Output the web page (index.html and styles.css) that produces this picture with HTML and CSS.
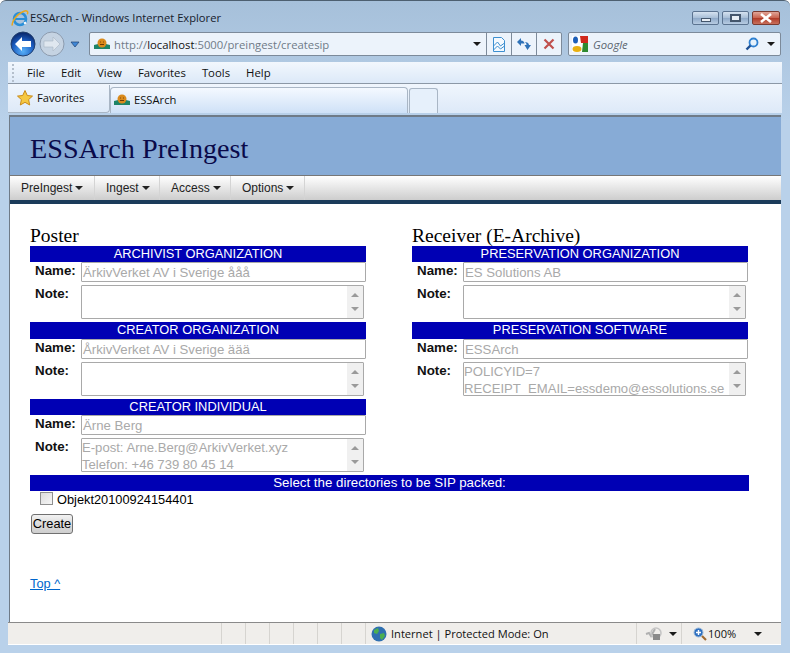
FILE: index.html
```html
<!DOCTYPE html>
<html lang="en">

<head>
  <meta charset="UTF-8">
  <title>ESSArch - Windows Internet Explorer</title>
  <link rel="stylesheet" href="styles.css">
</head>

<body>
  <div class="window">

    <div class="titlebar">
      <svg class="ie-icon" viewBox="0 0 18 18" width="18" height="18">
        <ellipse cx="9" cy="10" rx="6" ry="6" fill="none" stroke="#2b8fd8" stroke-width="2.6"/>
        <path d="M4 10h10" stroke="#2b8fd8" stroke-width="2"/>
        <path d="M13 14.5l2-1" stroke="#fff" stroke-width="2"/>
        <path d="M1.5 16.5C0 14 5 5 13 2.2c3-1 4.500 .5 3.300 3" fill="none" stroke="#e8a820" stroke-width="1.500"/>
      </svg>
      <span class="title-text">ESSArch - Windows Internet Explorer</span>
      <div class="win-buttons">
        <div class="win-btn"><span class="glyph-min"></span></div>
        <div class="win-btn"><span class="glyph-max"></span></div>
        <div class="win-btn win-close">
          <svg viewBox="0 0 14 10" width="14" height="10"><path d="M2 1l10 8M12 1L2 9" stroke="#fff" stroke-width="2.600"/></svg>
        </div>
      </div>
    </div>

    <div class="navbar">
      <svg class="nav-round" viewBox="0 0 26 26" width="26" height="26">
        <defs>
          <radialGradient id="backfill" cx="50%" cy="80%" r="75%">
            <stop offset="0" stop-color="#58b0f8"/>
            <stop offset=".6" stop-color="#1b5cc0"/>
            <stop offset="1" stop-color="#0a2a70"/>
          </radialGradient>
        </defs>
        <circle cx="13" cy="13" r="12" fill="url(#backfill)" stroke="#23406e"/>
        <path d="M5 13l7-7v4h9v6h-9v4z" fill="#fff"/>
      </svg>
      <svg class="nav-round fwd" viewBox="0 0 26 26" width="26" height="26">
        <circle cx="13" cy="13" r="12" fill="#c5d3e2" stroke="#8c9bae"/>
        <path d="M21 13l-7-7v4H5v6h9v4z" fill="#dfe7ef" stroke="#aab6c4" stroke-width=".6"/>
      </svg>
      <svg class="nav-drop" viewBox="0 0 10 7" width="10" height="7"><path d="M1 1h8L5 6z" fill="#3f87d6" stroke="#23406e" stroke-width=".7"/></svg>

      <div class="address">
        <svg class="site-icon" viewBox="0 0 16 12" width="16" height="12">
          <path d="M0 11V7l4-1h8l4 1v4z" fill="#1d8468"/>
          <circle cx="8" cy="5" r="4.500" fill="#d98a1c"/>
          <path d="M6 4h.8M9.200 4h.8M6 6.500h4" stroke="#6b3a08"/>
        </svg>
        <span class="url">http://<b>localhost</b>:5000/preingest/createsip</span>
        <span class="caret addr-caret"></span>
        <div class="addr-btn">
          <svg viewBox="0 0 14 15" width="14" height="15"><path d="M1.500 .5h8l3 3v11h-11z" fill="#f4f9fe" stroke="#3c8fd0"/><path d="M1.500 9l4-4 3 4 4-3M1.500 13l4-4 3 3 4-3" fill="none" stroke="#3c8fd0"/></svg>
        </div>
        <div class="addr-btn">
          <svg viewBox="0 0 16 14" width="16" height="14"><path d="M1 5l4-4v2.500c2 0 3 1 3.500 3H5V9z" fill="#2f72b8"/><path d="M15 8l-3.500 5-3-5h2c0-1.500-.5-2.500-2-3 2.500 0 4.500 1 4.500 3z" fill="#2f72b8"/></svg>
        </div>
        <div class="addr-btn">
          <svg viewBox="0 0 12 12" width="12" height="12"><path d="M1.500 1.500l9 9M10.500 1.500l-9 9" stroke="#c0504d" stroke-width="2.200"/></svg>
        </div>
      </div>

      <div class="search">
        <svg class="google-icon" viewBox="0 0 16 16" width="16" height="16">
          <rect width="16" height="16" fill="#fff"/>
          <path d="M8 0h8v7H9z" fill="#d0281c"/>
          <path d="M11 7h5v9H10z" fill="#2f8a30"/>
          <ellipse cx="3.500" cy="4" rx="2.500" ry="3.500" fill="#1d5fb8"/>
          <ellipse cx="5" cy="13" rx="4.500" ry="3" fill="#e8b010"/>
        </svg>
        <span class="search-text">Google</span>
        <svg class="lens" viewBox="0 0 14 14" width="14" height="14"><circle cx="8.500" cy="5.500" r="4" fill="#e6f2fc" stroke="#2f80d0" stroke-width="1.800"/><path d="M5.500 8.500L1.500 12.500" stroke="#1d4f94" stroke-width="2.400"/></svg>
        <span class="caret"></span>
      </div>
    </div>

    <div class="menubar">
      <span class="grip"></span>
      <span class="menu-item">File</span>
      <span class="menu-item">Edit</span>
      <span class="menu-item">View</span>
      <span class="menu-item">Favorites</span>
      <span class="menu-item">Tools</span>
      <span class="menu-item">Help</span>
    </div>

    <div class="favbar">
      <div class="fav-btn">
        <svg viewBox="0 0 16 16" width="16" height="16"><path d="M8 .5l2.300 5 5.200.6-3.900 3.500 1.100 5.400L8 12.300 3.300 15l1.100-5.400L.5 6.100l5.200-.6z" fill="#f5c842" stroke="#c98a18"/></svg>
        <span>Favorites</span>
      </div>
      <div class="tab">
        <svg class="site-icon" viewBox="0 0 16 12" width="16" height="12">
          <path d="M0 11V7l4-1h8l4 1v4z" fill="#1d8468"/>
          <circle cx="8" cy="5" r="4.500" fill="#d98a1c"/>
          <path d="M6 4h.8M9.200 4h.8M6 6.500h4" stroke="#6b3a08"/>
        </svg>
        <span>ESSArch</span>
      </div>
      <div class="tab-new"></div>
    </div>

    <div class="viewport">
      <div class="page-head">
        <h1>ESSArch PreIngest</h1>
      </div>
      <ul class="page-menu">
        <li>PreIngest<i></i></li>
        <li>Ingest<i></i></li>
        <li>Access<i></i></li>
        <li>Options<i></i></li>
      </ul>

      <div class="content">
        <div class="columns">
          <div class="column">
            <h2>Poster</h2>
            <div class="section-head">ARCHIVIST ORGANIZATION</div>
            <div class="field">
              <label>Name:</label>
              <div class="input">ÄrkivVerket AV i Sverige ååå</div>
            </div>
            <div class="field note">
              <label>Note:</label>
              <div class="textarea"><div class="text"></div><div class="scroll"><i class="up"></i><i class="down"></i></div></div>
            </div>
            <div class="section-head tall">CREATOR ORGANIZATION</div>
            <div class="field">
              <label>Name:</label>
              <div class="input">ÅrkivVerket AV i Sverige äää</div>
            </div>
            <div class="field note">
              <label>Note:</label>
              <div class="textarea"><div class="text"></div><div class="scroll"><i class="up"></i><i class="down"></i></div></div>
            </div>
            <div class="section-head">CREATOR INDIVIDUAL</div>
            <div class="field">
              <label>Name:</label>
              <div class="input">Ärne Berg</div>
            </div>
            <div class="field note">
              <label>Note:</label>
              <div class="textarea"><div class="text">E-post: Arne.Berg@ArkivVerket.xyz<br>Telefon: +46 739 80 45 14</div><div class="scroll"><i class="up"></i><i class="down"></i></div></div>
            </div>
          </div>

          <div class="column">
            <h2>Receiver (E-Archive)</h2>
            <div class="section-head">PRESERVATION ORGANIZATION</div>
            <div class="field">
              <label>Name:</label>
              <div class="input">ES Solutions AB</div>
            </div>
            <div class="field note">
              <label>Note:</label>
              <div class="textarea"><div class="text"></div><div class="scroll"><i class="up"></i><i class="down"></i></div></div>
            </div>
            <div class="section-head tall">PRESERVATION SOFTWARE</div>
            <div class="field">
              <label>Name:</label>
              <div class="input">ESSArch</div>
            </div>
            <div class="field note">
              <label>Note:</label>
              <div class="textarea"><div class="text">POLICYID=7<br>RECEIPT_EMAIL=essdemo@essolutions.se</div><div class="scroll"><i class="up"></i><i class="down"></i></div></div>
            </div>
          </div>
        </div>

        <div class="section-head dirs">Select the directories to be SIP packed:</div>
        <div class="dir-row"><span class="checkbox"></span>Objekt20100924154401</div>
        <div class="create">Create</div>
        <a class="top-link" href="#">Top ^</a>
      </div>
    </div>

    <div class="statusbar">
      <div class="cell first"></div>
      <div class="cell small"></div>
      <div class="cell small"></div>
      <div class="cell small"></div>
      <div class="cell small"></div>
      <div class="cell small"></div>
      <div class="cell small"></div>
      <div class="cell zone">
        <svg viewBox="0 0 16 16" width="16" height="16">
          <circle cx="8" cy="8" r="7.500" fill="#2f6fb0"/>
          <path d="M3 4l4-2 1 3-2 3-3-1zM9 8l4-1 1 3-3 4-2-2z" fill="#4caf50"/>
        </svg>
        <span>Internet | Protected Mode: On</span>
      </div>
      <div class="cell lock">
        <svg viewBox="0 0 18 14" width="18" height="14">
          <path d="M1 7l3-1 2 3 4-7" fill="none" stroke="#b0b0b0" stroke-width="2"/>
          <circle cx="11" cy="6" r="5" fill="none" stroke="#c4c4c4" stroke-width="1.500"/>
          <rect x="8" y="7" width="7" height="6" fill="#8a8a8a"/>
        </svg>
        <span class="caret"></span>
      </div>
      <div class="cell zoom">
        <svg viewBox="0 0 14 14" width="14" height="14">
          <circle cx="5.500" cy="5.500" r="4.500" fill="#2f70c0" stroke="#9ab8d8"/>
          <path d="M3 5.500h5M5.500 3v5" stroke="#fff" stroke-width="1.400"/>
          <path d="M9 9l4 4" stroke="#a06a30" stroke-width="2.200"/>
        </svg>
        <span>100%</span>
        <span class="caret"></span>
      </div>
    </div>

  </div>
</body>

</html>
```

FILE: styles.css
```css
* {
  box-sizing: border-box;
}

body {
  margin: 0;
  font-family: "Liberation Sans", Arial, sans-serif;
}

.window {
  width: 790px;
  height: 653px;
  overflow: hidden;
  display: flex;
  flex-direction: column;
  border-top: 1px solid #4d5f70;
  border-radius: 6px 6px 0 0;
  background: linear-gradient(#a6c0da, #b9d1ea 120px, #b9d1ea);
}

.titlebar {
  height: 28px;
  flex: none;
  display: flex;
  align-items: center;
  padding: 5px 10px 0 11px;
}

.ie-icon {
  margin-right: 1px;
}

.title-text {
  font-family: "Open Sans", sans-serif;
  font-size: 11.2px;
  color: #16202c;
}

.win-buttons {
  margin-left: auto;
  display: flex;
  gap: 3px;
  align-self: flex-start;
  margin-top: 5px;
}

.win-btn {
  width: 27px;
  height: 14px;
  border: 1px solid #5b7390;
  border-radius: 2px;
  background: linear-gradient(#d5e2f0, #a6bdd6 50%, #8ea9c8 52%, #b8cce2);
  display: flex;
  align-items: center;
  justify-content: center;
}

.win-close {
  width: 28px;
  border-color: #7b3a30;
  background: linear-gradient(#e0a598, #c8604c 50%, #b03a28 52%, #c8705c);
}

.glyph-min {
  width: 10px;
  height: 4px;
  margin-top: 4px;
  background: #e8eef5;
  border: 1px solid #44566c;
}

.glyph-max {
  width: 11px;
  height: 8px;
  border: 2px solid #44566c;
  background: #e8eef5;
}

.navbar {
  height: 30px;
  flex: none;
  display: flex;
  align-items: center;
  padding-left: 10px;
}

.nav-round.fwd {
  margin-left: 3px;
}

.nav-drop {
  margin-left: 5px;
}

.address {
  width: 473px;
  height: 24px;
  margin-left: 9px;
  display: flex;
  align-items: center;
  background: #ecf3fb;
  border: 1px solid #7c8a9a;
  border-radius: 2px;
  padding-left: 4px;
}

.site-icon {
  flex: none;
}

.url {
  margin-left: 4px;
  font-family: "Open Sans", sans-serif;
  font-size: 11.3px;
  color: #6f7b88;
  flex: 1;
}

.url b {
  font-weight: normal;
  color: #111;
}

.caret {
  width: 0;
  height: 0;
  border-left: 4px solid transparent;
  border-right: 4px solid transparent;
  border-top: 4px solid #1a1a1a;
  flex: none;
}

.addr-caret {
  margin-right: 5px;
}

.addr-btn {
  width: 25px;
  height: 22px;
  border-left: 1px solid #7c8a9a;
  display: flex;
  align-items: center;
  justify-content: center;
}

.search {
  width: 213px;
  height: 24px;
  margin-left: 6px;
  display: flex;
  align-items: center;
  background: #ecf3fb;
  border: 1px solid #7c8a9a;
  border-radius: 2px;
  padding: 0 5px 0 3px;
}

.search-text {
  margin-left: 5px;
  font-family: "Open Sans", sans-serif;
  font-size: 11.3px;
  font-style: italic;
  color: #5c6670;
  flex: 1;
}

.lens {
  margin-right: 8px;
}

.menubar {
  height: 22px;
  margin: 3px 8px 0;
  flex: none;
  display: flex;
  align-items: center;
  gap: 16px;
  padding-left: 4px;
  background: linear-gradient(#f2f7fd, #dce9f8);
  border-bottom: 1px solid #8c98a6;
  font-family: "Open Sans", sans-serif;
  font-size: 11.35px;
  color: #111;
}

.grip {
  width: 2px;
  height: 18px;
  margin-right: -3px;
  border-left: 2px dotted #b4bfcc;
}

.favbar {
  height: 29px;
  margin: 0 8px 2px;
  flex: none;
  display: flex;
  align-items: flex-end;
  background: linear-gradient(#f0f6fd, #dde9f8);
  font-family: "Open Sans", sans-serif;
  font-size: 11.2px;
  color: #111;
}

.fav-btn {
  width: 102px;
  height: 28px;
  display: flex;
  align-items: center;
  gap: 4px;
  padding: 0 0 2px 9px;
  border-right: 1px solid #a9b6c5;
  border-bottom: 1px solid #a9b6c5;
  border-radius: 0 0 4px 0;
}

.tab {
  width: 298px;
  height: 26px;
  display: flex;
  align-items: center;
  gap: 4px;
  padding: 0 0 2px 3px;
  background: linear-gradient(#f4f9ff, #cfe1f7);
  border: 1px solid #a9b6c5;
  border-bottom: none;
  border-radius: 4px 4px 0 0;
}

.tab-new {
  width: 29px;
  height: 25px;
  margin-left: 1px;
  background: #e6f0fb;
  border: 1px solid #a9b6c5;
  border-bottom: none;
  border-radius: 3px 3px 0 0;
}

.viewport {
  flex: 1;
  margin: 0 9px 0 9px;
  border-top: 2px solid #6f7b88;
  border-left: 1px solid #6f7b88;
  background: #fff;
  min-height: 0;
}

.page-head {
  height: 59px;
  padding: 16px 0 0 20px;
  background: #87abd6;
  border-bottom: 1px solid #777;
}

h1 {
  margin: 0;
  font-family: "Liberation Serif", "Times New Roman", serif;
  font-weight: normal;
  font-size: 28.2px;
  color: #0a0a4a;
}

.page-menu {
  margin: 0;
  padding: 0;
  list-style: none;
  height: 28px;
  display: flex;
  background: linear-gradient(#fff, #cdcdcd);
  border-bottom: 4px solid #1b3b5a;
  font-size: 12px;
  color: #222;
}

.page-menu li {
  height: 24px;
  display: flex;
  align-items: center;
  padding-left: 11px;
  border-right: 1px solid #d4d4d4;
}

.page-menu li:nth-child(1) {
  width: 85px;
}

.page-menu li:nth-child(2) {
  width: 65px;
}

.page-menu li:nth-child(3) {
  width: 71px;
}

.page-menu li:nth-child(4) {
  width: 74px;
}

.page-menu i {
  width: 0;
  height: 0;
  margin-left: 3px;
  border-left: 4px solid transparent;
  border-right: 4px solid transparent;
  border-top: 4px solid #222;
}

.content {
  padding: 22px 0 0 20px;
  width: 739px;
}

.columns {
  display: grid;
  grid-template-columns: 336px 336px;
  column-gap: 46px;
}

h2 {
  margin: 0;
  height: 20px;
  font-family: "Liberation Serif", "Times New Roman", serif;
  font-weight: normal;
  font-size: 19.5px;
  line-height: 20px;
  color: #000;
}

.section-head {
  height: 16px;
  background: #0000b4;
  color: #fff;
  font-size: 12.85px;
  line-height: 16px;
  text-align: center;
}

.section-head.tall {
  height: 17px;
}

.field {
  display: flex;
  height: 20px;
}

.field.note {
  height: 40px;
  padding-top: 3px;
}

.field label {
  width: 51px;
  padding: 1px 0 0 5px;
  font-size: 13.33px;
  font-weight: bold;
  line-height: 16px;
  color: #111;
}

.input {
  width: 285px;
  height: 20px;
  padding: 1px 0 0 1px;
  border: 1px solid #a9a9a9;
  border-radius: 1px;
  font-size: 13.2px;
  line-height: 18px;
  color: #a9a9a9;
}

.textarea {
  width: 283px;
  height: 34px;
  display: flex;
  border: 1px solid #a9a9a9;
  border-radius: 1px;
  font-size: 13.1px;
  line-height: 17px;
  color: #a9a9a9;
  overflow: hidden;
}

.textarea .text {
  flex: 1;
  white-space: nowrap;
  overflow: hidden;
}

.scroll {
  width: 16px;
  flex: none;
  background: #f0f0f0;
  display: flex;
  flex-direction: column;
  justify-content: space-between;
  align-items: center;
  padding: 7px 0;
}

.scroll i {
  width: 0;
  height: 0;
  border-left: 4px solid transparent;
  border-right: 4px solid transparent;
}

.scroll .up {
  border-bottom: 4px solid #9a9a9a;
}

.scroll .down {
  border-top: 4px solid #9a9a9a;
}

.section-head.dirs {
  width: 719px;
  font-size: 13.3px;
}

.dir-row {
  height: 22px;
  display: flex;
  padding-left: 10px;
  font-size: 12.8px;
  line-height: 17px;
  color: #000;
}

.checkbox {
  width: 13px;
  height: 13px;
  margin: 1px 4px 0 0;
  border: 1px solid #8e8f8f;
  background: linear-gradient(135deg, #dcdcdc, #f6f6f6);
}

.create {
  width: 42px;
  height: 20px;
  margin: 1px 0 0 1px;
  border: 1px solid #707070;
  border-radius: 3px;
  background: linear-gradient(#f2f2f2, #dcdcdc 50%, #cfcfcf);
  font-size: 12.8px;
  line-height: 18px;
  text-align: center;
  color: #000;
}

.top-link {
  display: inline-block;
  margin-top: 42px;
  font-size: 12.8px;
  color: #0066cc;
}

.statusbar {
  height: 23px;
  margin: 0 9px 8px 8px;
  flex: none;
  display: flex;
  background: #f0eeeb;
  border-top: 1px solid #8a8a8a;
  border-bottom: 1px solid #fff;
  font-family: "Open Sans", sans-serif;
  font-size: 11.1px;
  color: #111;
}

.cell {
  height: 100%;
  display: flex;
  align-items: center;
  border-right: 1px solid #d6d4d0;
}

.cell.first {
  width: 214px;
}

.cell.small {
  width: 24px;
}

.cell.zone {
  width: 271px;
  gap: 4px;
  padding-left: 5px;
}

.cell.lock {
  width: 45px;
  gap: 6px;
  padding-left: 8px;
}

.cell.zoom {
  flex: 1;
  border-right: none;
  padding-left: 11px;
  gap: 1px;
}

.cell.zoom .caret {
  margin-left: 17px;
}
```
